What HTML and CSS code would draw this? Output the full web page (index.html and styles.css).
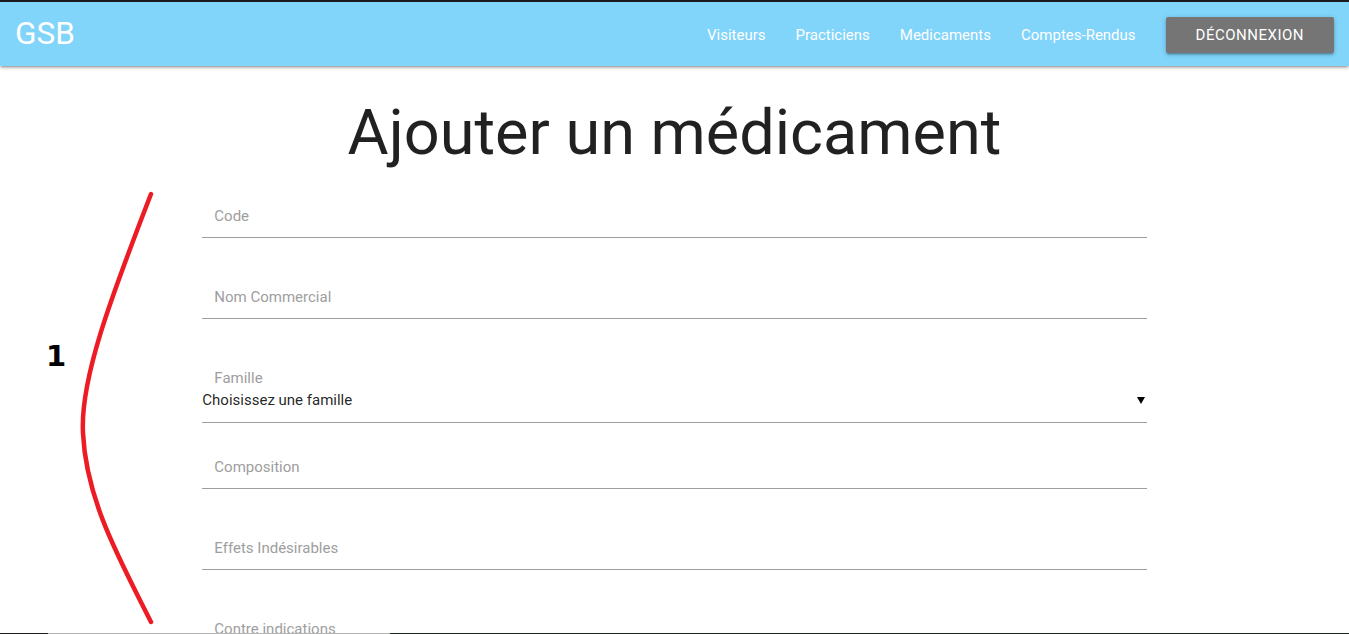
FILE: index.html
```html
<!DOCTYPE html>
<html lang="fr">
<head>
<meta charset="utf-8">
<title>GSB - Ajouter un médicament</title>
<link rel="stylesheet" href="styles.css">
</head>
<body>
<nav class="topbar">
  <a class="brand" href="#">GSB</a>
  <ul class="menu">
    <li><a href="#">Visiteurs</a></li>
    <li><a href="#">Practiciens</a></li>
    <li><a href="#">Medicaments</a></li>
    <li><a href="#">Comptes-Rendus</a></li>
    <li><a class="btn" href="#">Déconnexion</a></li>
  </ul>
</nav>

<main class="container">
  <h1 class="title">Ajouter un médicament</h1>
  <form class="form">
    <div class="field"><input type="text" placeholder="Code"></div>
    <div class="field"><input type="text" placeholder="Nom Commercial"></div>
    <div class="field select-field">
      <label class="select-label">Famille</label>
      <div class="select">
        <span>Choisissez une famille</span>
        <svg class="caret" width="8" height="7" viewBox="0 0 8 7"><path d="M0 0 H8 L4 7 Z" fill="#000"/></svg>
      </div>
    </div>
    <div class="field"><input type="text" placeholder="Composition"></div>
    <div class="field"><input type="text" placeholder="Effets Indésirables"></div>
    <div class="field"><input type="text" placeholder="Contre indications"></div>
    <div class="field"><input type="text" placeholder="Prix échantillon"></div>
  </form>
</main>

<div class="annotation">
  <span class="note-num">1</span>
  <svg class="curve" width="200" height="634" viewBox="0 0 200 634">
    <path d="M151 194 C 110 300 80 380 83 433 C 86 500 120 560 151 622" fill="none" stroke="#ed1c24" stroke-width="4.5" stroke-linecap="round"/>
  </svg>
</div>
<div class="screen-edge"></div>
</body>
</html>
```

FILE: styles.css
```css
* { box-sizing: border-box; }

html, body {
  margin: 0;
  padding: 0;
  background: #fff;
  font-family: Roboto, "Liberation Sans", sans-serif;
  color: rgba(0, 0, 0, 0.87);
}

.topbar {
  display: flex;
  align-items: center;
  justify-content: space-between;
  height: 66px;
  border-top: 2px solid #1b1b1b;
  background: #81d4fa;
  box-shadow: 0 2px 2px 0 rgba(0,0,0,.14), 0 3px 1px -2px rgba(0,0,0,.12), 0 1px 5px 0 rgba(0,0,0,.2);
  position: relative;
  z-index: 2;
}

.brand {
  padding-left: 15px;
  font-size: 31.5px;
  line-height: 64px;
  color: #fff;
  text-decoration: none;
}

.menu {
  display: flex;
  align-items: center;
  list-style: none;
  margin: 0;
  padding: 2px 0 0;
  height: 64px;
}

.menu li {
  padding: 0 15px;
}

.menu a {
  color: #fff;
  text-decoration: none;
  font-size: 15px;
  line-height: 62px;
}

.menu a.btn {
  display: inline-block;
  height: 36px;
  line-height: 36px;
  padding: 0 30px;
  background: #757575;
  border-radius: 2px;
  text-transform: uppercase;
  letter-spacing: .5px;
  box-shadow: 0 2px 2px 0 rgba(0,0,0,.14), 0 3px 1px -2px rgba(0,0,0,.12), 0 1px 5px 0 rgba(0,0,0,.2);
}

.container {
  width: 70%;
  margin: 0 auto;
}

.title {
  margin: 31.6px 0 25px;
  font-size: 63px;
  line-height: 69.3px;
  font-weight: 400;
  text-align: center;
  color: rgba(0, 0, 0, 0.87);
  width: 1349px;
  margin-left: calc((100% - 1349px) / 2);
}

.form {
  display: flex;
  flex-direction: column;
}

.field {
  margin-bottom: 35px;
}

.field input {
  display: block;
  width: 100%;
  height: 46px;
  margin: 0;
  padding: 3px 12px 0;
  border: none;
  border-bottom: 1px solid #9e9e9e;
  background: transparent;
  font-family: Roboto, "Liberation Sans", sans-serif;
  font-size: 15px;
  color: rgba(0,0,0,.87);
  outline: none;
}

.field input::placeholder {
  color: #9e9e9e;
}

.select-field {
  margin-bottom: 20px;
}

.select-label {
  display: block;
  padding: 15px 0 0 12px;
  font-size: 15px;
  line-height: 18px;
  color: #9e9e9e;
}

.select {
  display: flex;
  justify-content: space-between;
  align-items: center;
  height: 36px;
  padding: 0 2px 8px 0;
  border-bottom: 1px solid #9e9e9e;
  font-size: 15px;
  line-height: 26px;
  color: rgba(0,0,0,.87);
}

.caret {
  display: block;
}

.annotation {
  position: absolute;
  top: 0;
  left: 0;
  width: 200px;
  height: 634px;
  pointer-events: none;
}

.curve {
  position: absolute;
  top: 0;
  left: 0;
}

.note-num {
  position: absolute;
  top: 336px;
  left: 46px;
  font-family: "DejaVu Sans", sans-serif;
  font-weight: 700;
  font-size: 29px;
  line-height: 40px;
  color: #000;
}

.screen-edge {
  position: fixed;
  left: 0;
  bottom: 0;
  width: 100%;
  height: 1px;
  background: linear-gradient(to right, #1e1e1e 0 48px, #b5b5b5 48px 390px, #1e2420 390px 100%);
  z-index: 5;
}
```
